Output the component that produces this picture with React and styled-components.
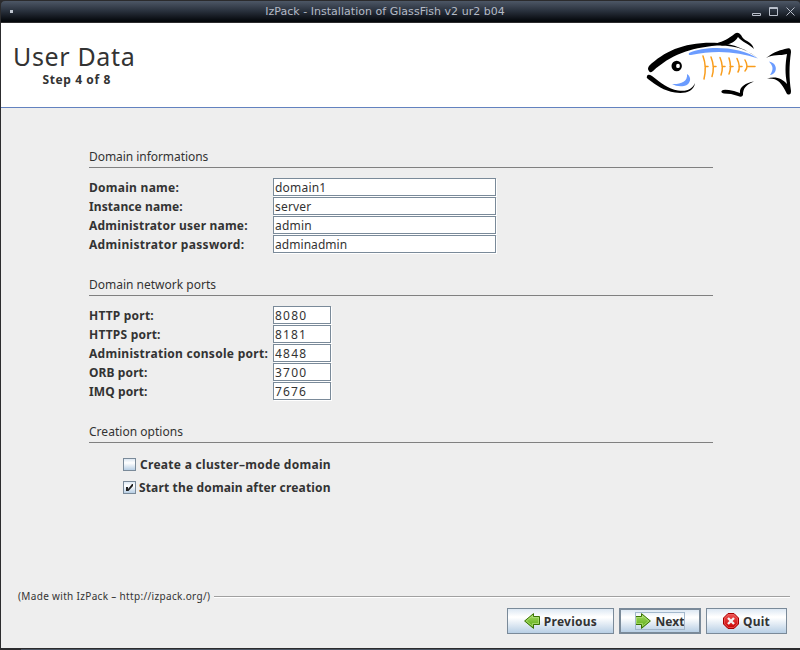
import React from "react";
import styled, { createGlobalStyle } from "styled-components";

const Global = createGlobalStyle`
  * { box-sizing: border-box; }
  body { margin: 0; background: #2c2c2e; }
`;

const Window = styled.div`
  width: 800px;
  height: 650px;
  display: flex;
  flex-direction: column;
  overflow: hidden;
  color: #333;
  font-family: "Noto Sans", sans-serif;
  font-size: 12px;
  background: #2c2c2e;
`;

const TitleBar = styled.header`
  height: 23px;
  flex: none;
  display: grid;
  grid-template-columns: 1fr auto 1fr;
  align-items: center;
  border-top: 1px solid #2b2b2d;
  border-bottom: 1px solid #2b2b2d;
  border-left: 1px solid #2b2b2d;
  border-radius: 5px 4px 0 0;
  background: linear-gradient(#4d5766, #2b333f 45%, #05080c 95%);
`;

const MenuDot = styled.span`
  width: 3px;
  height: 3px;
  margin-left: 9px;
  background: #c0c6d0;
`;

const Title = styled.span`
  font: 11px/20px "DejaVu Sans", sans-serif;
  letter-spacing: 0.03px;
  color: #b4bac6;
  white-space: nowrap;
  margin-right: 31px;
`;

const WindowControls = styled.svg`
  width: 52px;
  height: 21px;
  justify-self: end;
`;

const Text = styled.span`
  display: block;
  white-space: nowrap;
  font-size: ${(p) => p.$size || 12}px;
  font-weight: ${(p) => (p.$bold ? 700 : 400)};
  letter-spacing: ${(p) => p.$spacing || 0}px;
  line-height: ${(p) => p.$line || 19}px;
`;

const Banner = styled.section`
  height: 85px;
  flex: none;
  margin-left: 1px;
  display: flex;
  justify-content: space-between;
  background: #fff;
  border-bottom: 1px solid #6382bf;
`;

const Heading = styled.div`
  padding: 18px 0 0 12px;
`;

const StepText = styled.div`
  padding: 1px 0 0 29.5px;
`;

const Fish = styled.svg`
  width: 160px;
  height: 84px;
  flex: none;
`;

const Content = styled.main`
  flex: 1;
  margin: 0 0 0 1px;
  background: #eee;
  display: flex;
  flex-direction: column;
  padding: 39px 10px 0 17px;
`;

const Form = styled.div`
  width: 624px;
  height: 441px;
  margin-left: 71px;
`;

const Section = styled.section`
  height: ${(p) => p.$height}px;
`;

const SectionTitle = styled.div`
  height: 21px;
  margin-bottom: 10px;
  border-bottom: 1px solid #808080;
`;

const FieldRow = styled.label`
  display: grid;
  grid-template-columns: 184px auto;
  justify-content: start;
  height: 19px;
`;

const Field = styled.input`
  width: ${(p) => p.$width}px;
  height: 18px;
  padding: 0 1px;
  border: 1px solid #7a8a99;
  box-shadow: 1px 1px 0 #fff;
  border-radius: 0;
  outline: none;
  background: #fff;
  color: #333;
  font: 12px/16px "Noto Sans", sans-serif;
  letter-spacing: ${(p) => p.$spacing}px;
`;

const Option = styled.label`
  display: flex;
  align-items: center;
  height: 23px;
  padding-left: 34px;
  gap: ${(p) => p.$gap}px;
`;

const CheckBox = styled.span`
  width: 13px;
  height: 13px;
  flex: none;
  display: grid;
  place-items: center;
  border: 1px solid #7a8a99;
  background: linear-gradient(#dde8f3, #fff 35%, #b8cfe5);
`;

const Credit = styled.div`
  display: flex;
  align-items: center;
  height: 16px;
  gap: 4px;
`;

const Rule = styled.div`
  flex: 1;
  height: 2px;
  margin-top: 2px;
  border-top: 1px solid #a0a0a0;
  border-bottom: 1px solid #fff;
`;

const Actions = styled.footer`
  display: flex;
  justify-content: flex-end;
  gap: 5px;
  padding: 4px 3px 0 0;
`;

const Button = styled.button`
  width: ${(p) => p.$width}px;
  height: 26px;
  padding: 0;
  display: flex;
  align-items: center;
  justify-content: center;
  border: ${(p) => (p.$primary ? 2 : 1)}px solid #7a8a99;
  border-radius: 0;
  color: #333;
  font-family: "Noto Sans", sans-serif;
  background: linear-gradient(#dde8f3, #fff 32%, #fff 36%, #b8cfe5);
`;

const ButtonContent = styled.span`
  display: flex;
  align-items: center;
  height: 18px;
  gap: 4px;
  outline: ${(p) => (p.$focused ? "1px solid #a3b8cc" : "none")};
  outline-offset: -1px;
`;

const BottomEdge = styled.div`
  height: 2px;
  flex: none;
  background: linear-gradient(90deg, #2c2c2e 21px, #4b5563 21px, #4b5563 780px, #2c2c2e 780px);
  border-top: 1px solid #2b2b2d;
`;

const Arrow = ({ flip }) => (
  <svg width="16" height="16" viewBox="0 0 16 16">
    <defs>
      <linearGradient id="leaf" x2="0" y2="1">
        <stop offset="0" stopColor="#a8dc68" />
        <stop offset="1" stopColor="#55a80c" />
      </linearGradient>
    </defs>
    <g transform={flip ? "translate(16 0) scale(-1 1)" : undefined}>
      <path d="M.6 8 9.500.6v2.900h6v8h-6v3.900z" fill="url(#leaf)" stroke="#3a7304" />
      <path d="M2.200 8 8.500 2.900v1.600h6v6h-6v2.600z" fill="none" stroke="#b5e37e" strokeWidth=".7" />
    </g>
  </svg>
);

const StopIcon = () => (
  <svg width="16" height="16" viewBox="0 0 16 16">
    <defs>
      <linearGradient id="stop" x2="0" y2="1">
        <stop offset="0" stopColor="#ee5555" />
        <stop offset="1" stopColor="#c80000" />
      </linearGradient>
    </defs>
    <path d="M5 .5h6L15.500 5v6L11 15.500H5L.5 11V5z" fill="url(#stop)" stroke="#a40000" />
    <path d="M5.400 1.500h5.200L14.500 5.400v5.200L10.600 14.500H5.400L1.500 10.600V5.400z" fill="none" stroke="#f06060" strokeWidth=".7" />
    <path d="m5 5 6 6m0-6-6 6" stroke="#f4f4f4" strokeWidth="2.400" />
  </svg>
);

const GlassFish = () => (
  <Fish viewBox="0 0 160 84">
    <g transform="translate(0 5)">
      <path d="M9 43Q10 45.500 13 43C31 27 49 20 77 17.500C96 17 108 22 119 31C106 21 94 16 78 15C45 13.500 25 23 9 38Q7 41 9 43Z" />
      <path d="M76 15.500C84 13 88 11 95 5.500Q98 3.500 101 7C104 14 111 12 114 21C109 16 102 14 98 9C95 15 87 17 82 17.500Z" />
      <path d="M7 48Q8 45.500 12 48C21 55 28 61 38 62.500C48 64 53 60 55 55C54 64 44 66 35 64.500C24 63 16 57 8 51Q6 50 7 48Z" />
      <path d="M126 30C135 23 141 22 147 20.500Q151 19 151 24C149 38 149 50 151 63Q151 68 147 66C141 54 138 50 127 50.500C137 48 142 51 147 56C145 46 145 37 147 26C140 28 133 26 126 30Z" />
      <path d="M82 62.500Q84 61 94 63L100 65C99 59 106 54.500 114 53.500C106 57 103 60 103 67Q102 70 98 68L91 66 84 65.500Q80 64.500 82 62.500Z" />
      <path fillRule="evenodd" d="M31.500 38a5.200 5.200 0 1 0 10.400 0a5.200 5.200 0 1 0-10.400 0M38 35.700a1.900 2.200 0 1 1 0 4.400a1.900 2.200 0 1 1 0-4.400" />
      <g fill="#6b9cff">
        <path d="M49 25C66 17.500 99 18 118 30.500C98 23.500 75 22 51 27Q48 27.500 49 25Z" />
        <path d="M47 46C52 49 51 56.500 44 58Q37 59 32 56C40 56.500 48 54 47 46Z" />
        <path d="M129 33.500C138 35 138 46 130 47C134 41 133 38 129 33.500Z" />
      </g>
      <g fill="none" stroke="#f99d1c" strokeWidth="1.500" strokeLinecap="round">
        <path d="M63 28Q67 39 64 51M71 29Q75 39 72 48.500M80 29.500Q84 39 81 47M89 30Q92 39 89 46M97 30.500Q101 39 98 44M105 32Q109 39 105 43M65 38.500h3M73 38.500h3M82 38.500h3M90 38.500h3M99 38.500h3M107 38.500h8" />
      </g>
    </g>
  </Fish>
);

const domainFields = [
  ["Domain name:", "domain1", 0.27, 0.2],
  ["Instance name:", "server", 0.1, 0.2],
  ["Administrator user name:", "admin", 0.2, 0.2],
  ["Administrator password:", "adminadmin", 0.32, 0.05],
];

const portFields = [
  ["HTTP port:", "8080", 0.2, 1.25],
  ["HTTPS port:", "8181", 0.2, 1.1],
  ["Administration console port:", "4848", 0.28, 1.25],
  ["ORB port:", "3700", 0.1, 1.25],
  ["IMQ port:", "7676", 0.1, 1.1],
];

const Fields = ({ items, width }) =>
  items.map(([label, value, spacing, valueSpacing]) => (
    <FieldRow key={label}>
      <Text $bold $spacing={spacing}>{label}</Text>
      <Field $width={width} $spacing={valueSpacing} defaultValue={value} />
    </FieldRow>
  ));

export default function App() {
  return (
    <Window>
      <Global />
      <TitleBar>
        <MenuDot />
        <Title>IzPack - Installation of GlassFish v2 ur2 b04</Title>
        <WindowControls viewBox="0 0 52 21" fill="none" stroke="#b9bfca">
          <path d="M4.500 12.500h8v2h-8zM21.500 6.500h8v8h-8zM21 7.500h9M38.500 6.500l8 8m0-8-8 8" />
        </WindowControls>
      </TitleBar>
      <Banner>
        <Heading>
          <Text $size={25} $line={30} $spacing={0.65}>User Data</Text>
          <StepText><Text $bold $line={16} $spacing={0.6}>Step 4 of 8</Text></StepText>
        </Heading>
        <GlassFish />
      </Banner>
      <Content>
        <Form>
          <Section $height={128}>
            <SectionTitle><Text $spacing={-0.05}>Domain informations</Text></SectionTitle>
            <Fields items={domainFields} width={223} />
          </Section>
          <Section $height={147}>
            <SectionTitle><Text>Domain network ports</Text></SectionTitle>
            <Fields items={portFields} width={58} />
          </Section>
          <Section $height={100}>
            <SectionTitle><Text $spacing={0.03}>Creation options</Text></SectionTitle>
            <Option $gap={4}>
              <CheckBox />
              <Text $bold $spacing={0.29}>Create a cluster–mode domain</Text>
            </Option>
            <Option $gap={3}>
              <CheckBox>
                <svg width="9" height="9" viewBox="0 0 9 9"><path d="M1 4h2v2l4-5h1v2L3.500 8H1z" fill="#222" /></svg>
              </CheckBox>
              <Text $bold $spacing={0.15}>Start the domain after creation</Text>
            </Option>
          </Section>
        </Form>
        <Credit>
          <Text $size={10} $spacing={0.33}>(Made with IzPack – http://izpack.org/)</Text>
          <Rule />
        </Credit>
        <Actions>
          <Button $width={107}><ButtonContent><Arrow /><Text $bold $spacing={0.25}>Previous</Text></ButtonContent></Button>
          <Button $width={82} $primary><ButtonContent $focused><Arrow flip /><Text $bold $spacing={0.1}>Next</Text></ButtonContent></Button>
          <Button $width={81}><ButtonContent><StopIcon /><Text $bold $spacing={0.2}>Quit</Text></ButtonContent></Button>
        </Actions>
      </Content>
      <BottomEdge />
    </Window>
  );
}
